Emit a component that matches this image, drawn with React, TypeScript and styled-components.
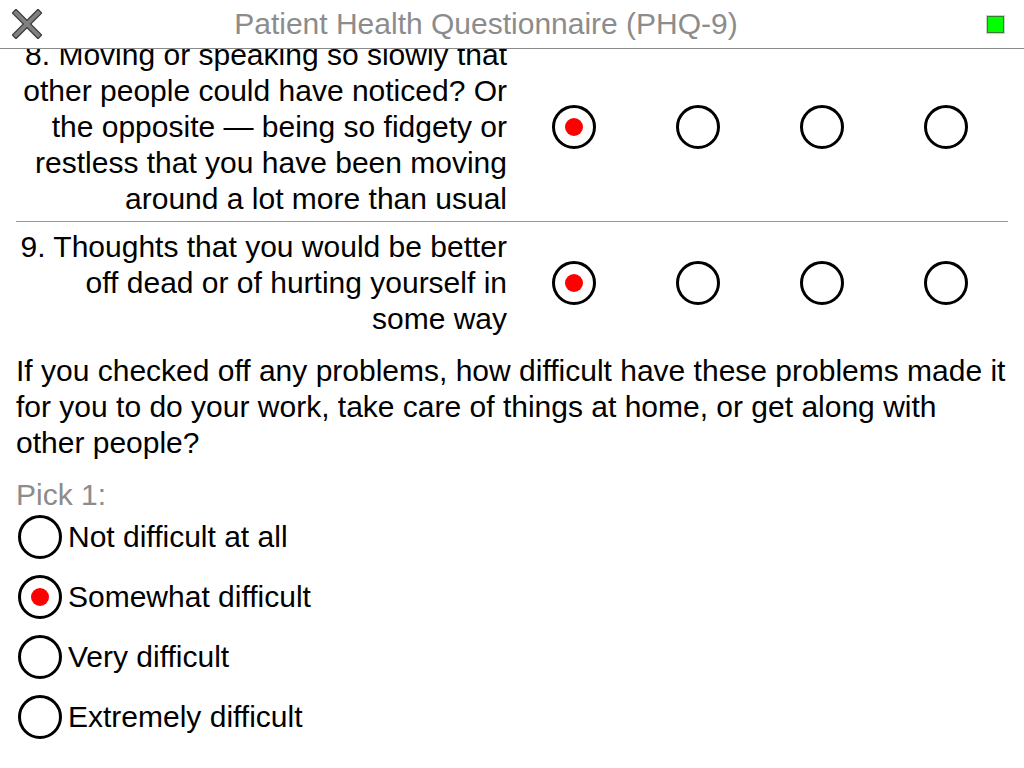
import React, { useLayoutEffect, useRef } from "react";
import styled, { createGlobalStyle } from "styled-components";

const Global = createGlobalStyle`
  html, body { margin: 0; padding: 0; background: #fff; }
  body { font-family: "Liberation Sans", Arial, Helvetica, sans-serif; color: #000; }
  * { box-sizing: border-box; }
`;

const Page = styled.div`
  width: 1024px;
  height: 768px;
  display: flex;
  flex-direction: column;
  overflow: hidden;
  background: #fff;
`;

const Header = styled.header`
  height: 49px;
  flex: none;
  display: flex;
  align-items: center;
  border-bottom: 1px solid #8a8a8a;
`;

const CloseButton = styled.button`
  width: 56px;
  height: 48px;
  border: 0;
  background: none;
  padding: 0 0 0 12px;
  display: flex;
  align-items: center;
`;

const Title = styled.h1`
  flex: 1;
  margin: 0;
  text-align: center;
  font-size: 30px;
  font-weight: normal;
  color: #8c8c8c;
  line-height: 48px;
  white-space: nowrap;
`;

const StatusArea = styled.div`
  width: 108px;
  display: flex;
  justify-content: flex-end;
  padding-right: 20px;
`;

const StatusSquare = styled.div`
  width: 17px;
  height: 17px;
  background: #00ff00;
  border: 1px solid #2f7f2f;
  box-shadow: 0 0 0 1px #d0d0d0;
`;

const Scroller = styled.div`
  flex: 1;
  overflow: hidden;
`;

const Content = styled.div`
  padding: 0 16px 200px;
  font-size: 30px;
  line-height: 36px;
`;

const QuestionRow = styled.div<{ $divider?: boolean }>`
  display: grid;
  grid-template-columns: 1fr repeat(4, 124px);
  align-items: center;
  padding: 7px 0 4px;
  border-bottom: ${(p) => (p.$divider ? "1px solid #9a9a9a" : "none")};
`;

const QuestionText = styled.div`
  text-align: right;
  padding-right: 5px;
`;

const RadioCell = styled.div`
  display: flex;
  justify-content: center;
  align-items: center;
`;

const Radio = styled.span<{ $checked?: boolean }>`
  width: 44px;
  height: 44px;
  border-radius: 50%;
  border: 3px solid #000;
  display: flex;
  align-items: center;
  justify-content: center;
  flex: none;
  &::after {
    content: "";
    width: 18px;
    height: 18px;
    border-radius: 50%;
    background: ${(p) => (p.$checked ? "#ff0000" : "transparent")};
  }
`;

const Paragraph = styled.p`
  margin: 12px 0 16px;
`;

const PickLabel = styled.div`
  color: #8c8c8c;
`;

const OptionList = styled.div`
  display: flex;
  flex-direction: column;
  gap: 16px;
  margin-top: 2px;
`;

const Option = styled.label`
  display: flex;
  align-items: center;
  gap: 6px;
  padding-left: 2px;
  height: 44px;
`;

const CloseIcon = () => (
  <svg width="30" height="30" viewBox="0 0 30 30">
    <g strokeLinecap="square">
      <line x1="4" y1="4" x2="26" y2="26" stroke="#3a3a3a" strokeWidth="6.5" />
      <line x1="26" y1="4" x2="4" y2="26" stroke="#3a3a3a" strokeWidth="6.5" />
      <line x1="4" y1="4" x2="26" y2="26" stroke="#808080" strokeWidth="4" />
      <line x1="26" y1="4" x2="4" y2="26" stroke="#808080" strokeWidth="4" />
    </g>
  </svg>
);

const questions = [
  {
    text: "8. Moving or speaking so slowly that other people could have noticed? Or the opposite \u2014 being so fidgety or restless that you have been moving around a lot more than usual",
    answer: 0,
  },
  {
    text: "9. Thoughts that you would be better off dead or of hurting yourself in some way",
    answer: 0,
  },
];

const options = [
  "Not difficult at all",
  "Somewhat difficult",
  "Very difficult",
  "Extremely difficult",
];

export default function App() {
  const ref = useRef<HTMLDivElement>(null);
  useLayoutEffect(() => {
    if (ref.current) ref.current.scrollTop = 19;
  }, []);
  return (
    <Page>
      <Global />
      <Header>
        <CloseButton aria-label="Close">
          <CloseIcon />
        </CloseButton>
        <Title>Patient Health Questionnaire (PHQ-9)</Title>
        <StatusArea>
          <StatusSquare />
        </StatusArea>
      </Header>
      <Scroller ref={ref}>
        <Content>
          {questions.map((q, i) => (
            <QuestionRow key={i} $divider={i < questions.length - 1}>
              <QuestionText>{q.text}</QuestionText>
              {[0, 1, 2, 3].map((c) => (
                <RadioCell key={c}>
                  <Radio $checked={q.answer === c} />
                </RadioCell>
              ))}
            </QuestionRow>
          ))}
          <Paragraph>
            If you checked off any problems, how difficult have these problems
            made it for you to do your work, take care of things at home, or get
            along with other people?
          </Paragraph>
          <PickLabel>Pick 1:</PickLabel>
          <OptionList>
            {options.map((o, i) => (
              <Option key={o}>
                <Radio $checked={i === 1} />
                {o}
              </Option>
            ))}
          </OptionList>
        </Content>
      </Scroller>
    </Page>
  );
}
